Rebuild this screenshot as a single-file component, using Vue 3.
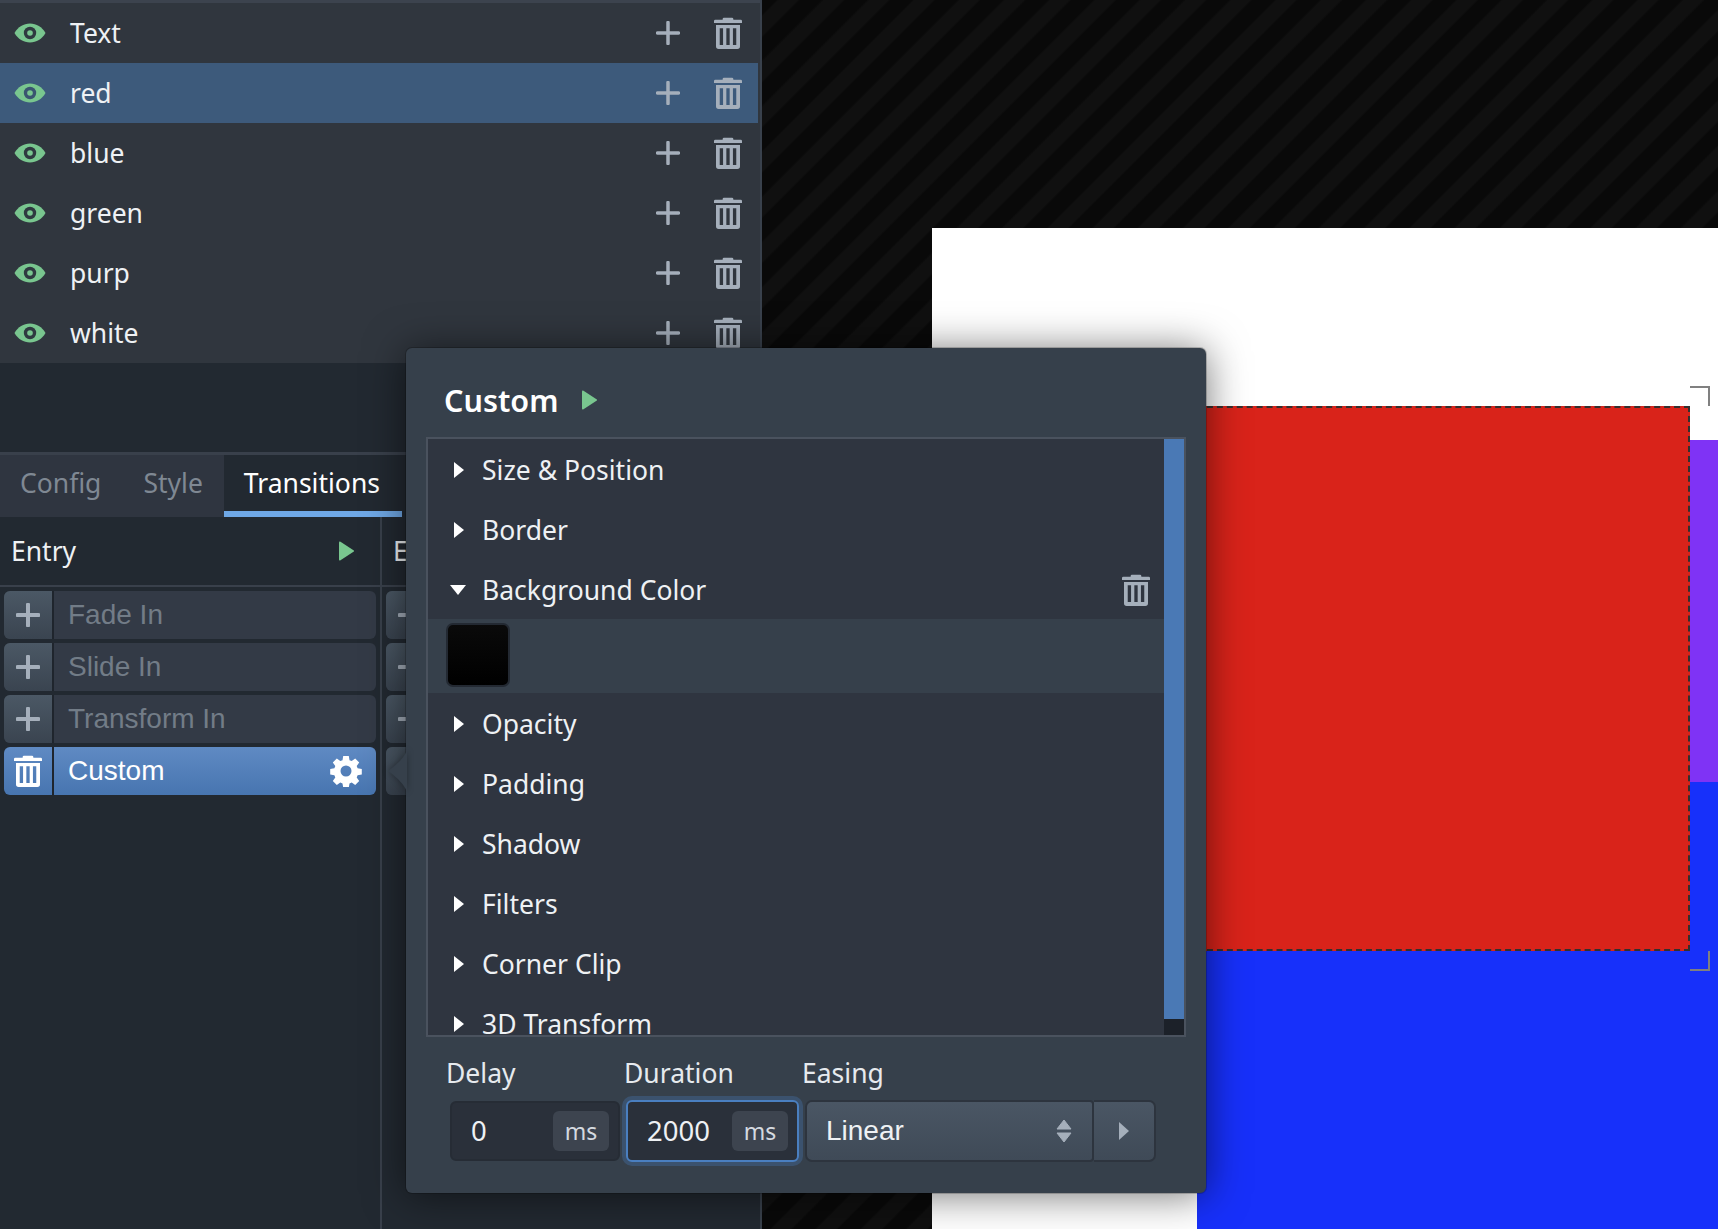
<script setup>
const layers = ['Text', 'red', 'blue', 'green', 'purp', 'white']
const presets = ['Fade In', 'Slide In', 'Transform In']
const groups = [
  { name: 'Size & Position' },
  { name: 'Border' },
  { name: 'Background Color', open: true },
  { name: 'Opacity' },
  { name: 'Padding' },
  { name: 'Shadow' },
  { name: 'Filters' },
  { name: 'Corner Clip' },
  { name: '3D Transform' }
]
const trashPath = 'M9 0.500h6a1 1 0 0 1 1 1V2h5.500a1 1 0 0 1 1 1v1.500h-21V3a1 1 0 0 1 1-1H8v-.5a1 1 0 0 1 1-1zM3 6h18v16a2 2 0 0 1-2 2H5a2 2 0 0 1-2-2zM5.800 8.500v12.500h2.500V8.500zm4.950 0v12.500h2.500V8.500zm4.950 0v12.500h2.500V8.500z'
const gearPath = 'M13.2 1h5.6l.7 4.2 2.2.9 3.5-2.5 4 4-2.5 3.5.9 2.2 4.2.7v5.6l-4.2.7-.9 2.2 2.5 3.5-4 4-3.5-2.5-2.2.9-.7 4.2h-5.600l-.7-4.2-2.200-.9-3.500 2.500-4-4 2.500-3.500-.9-2.200-4.200-.7v-5.600l4.200-.7.9-2.200-2.500-3.500 4-4 3.500 2.500 2.200-.9zM16 10.500a5.500 5.500 0 1 0 0 11 5.500 5.500 0 0 0 0-11z'
</script>

<template>
  <div class="app">
    <aside class="side">
      <div class="layers">
        <div v-for="layer in layers" :key="layer" class="layer" :class="{ selected: layer === 'red' }">
          <svg class="eye" viewBox="0 0 32 20">
            <path d="M0.500 10C4 4 9.500 0.500 16 0.500S28 4 31.500 10C28 16 22.500 19.500 16 19.500S4 16 0.500 10z" fill="#79c68f" />
            <circle cx="16" cy="10" r="6.200" fill="#2f3a40" />
            <circle cx="16" cy="10" r="2.800" fill="#79c68f" />
          </svg>
          <span class="layer-name">{{ layer }}</span>
          <svg class="plus" viewBox="0 0 24 24"><path d="M12 1.500v21M1.500 12h21" /></svg>
          <svg class="trash" viewBox="0 0 24 24"><path :d="trashPath" fill-rule="evenodd" /></svg>
        </div>
      </div>
      <div class="spacer"></div>
      <div class="tabs">
        <div class="tab">Config</div>
        <div class="tab">Style</div>
        <div class="tab active">Transitions</div>
        <div class="tab-rest"></div>
      </div>
      <div class="columns">
        <div class="col first">
          <div class="col-head">
            <span>Entry</span>
            <svg class="play" viewBox="0 0 16 20"><path d="M1 1.500v17a1 1 0 0 0 1.500.8l13-8.500a1 1 0 0 0 0-1.600l-13-8.500A1 1 0 0 0 1 1.500z" /></svg>
          </div>
          <div class="items">
            <div v-for="p in presets" :key="p" class="item">
              <div class="item-btn"><svg class="item-plus" viewBox="0 0 24 24"><path d="M1.500 12h21M12 1.500v21" /></svg></div>
              <div class="item-label">{{ p }}</div>
            </div>
            <div class="item on">
              <div class="item-btn"><svg class="item-trash" viewBox="0 0 24 24"><path :d="trashPath" fill-rule="evenodd" /></svg></div>
              <div class="item-label">Custom</div>
              <svg class="gear" viewBox="0 0 32 32"><path :d="gearPath" fill-rule="evenodd" /></svg>
            </div>
          </div>
        </div>
        <div class="col second">
          <div class="col-head">Exit</div>
          <div class="items">
            <div v-for="n in 4" :key="n" class="item">
              <div class="item-btn"><svg class="item-plus" viewBox="0 0 24 24"><path d="M1.500 12h21M12 1.500v21" /></svg></div>
            </div>
          </div>
        </div>
      </div>
    </aside>

    <main class="canvas">
      <div class="sheet"></div>
      <div class="box purple"></div>
      <div class="box blue"></div>
      <div class="box red"></div>
      <div class="corner tr"></div>
      <div class="corner br"></div>
    </main>

    <section class="popup">
      <svg class="arrow" viewBox="0 0 20 46"><path d="M20 0C20 8 8 18 1 23C8 28 20 38 20 46z" /></svg>
      <div class="pop-title">
        <span>Custom</span>
        <svg class="play" viewBox="0 0 16 20"><path d="M1 1.500v17a1 1 0 0 0 1.500.8l13-8.500a1 1 0 0 0 0-1.600l-13-8.500A1 1 0 0 0 1 1.500z" /></svg>
      </div>
      <div class="prop-box">
        <div class="prop-list">
          <template v-for="g in groups" :key="g.name">
            <div class="prop">
              <span class="caret" :class="{ open: g.open }"></span>
              <span class="prop-name">{{ g.name }}</span>
              <svg v-if="g.open" class="trash" viewBox="0 0 24 24"><path :d="trashPath" fill-rule="evenodd" /></svg>
            </div>
            <div v-if="g.open" class="prop-body"><div class="swatch"></div></div>
          </template>
        </div>
        <div class="scrollbar"><div class="thumb"></div></div>
      </div>
      <div class="fields">
        <div class="field delay">
          <label>Delay</label>
          <div class="input">
            <span class="value">0</span>
            <span class="unit">ms</span>
          </div>
        </div>
        <div class="field duration">
          <label>Duration</label>
          <div class="input focused">
            <span class="value">2000</span>
            <span class="unit">ms</span>
          </div>
        </div>
        <div class="field easing">
          <label>Easing</label>
          <div class="select-row">
            <div class="select">
              <span>Linear</span>
              <svg class="updown" viewBox="0 0 16 24"><path d="M8 1l7 9H1zM8 23l7-9H1z" /></svg>
            </div>
            <div class="next"><svg viewBox="0 0 10 18"><path d="M0 0l10 9-10 9z" /></svg></div>
          </div>
        </div>
      </div>
    </section>
  </div>
</template>

<style scoped>
.app {
  position: relative;
  display: flex;
  width: 1718px;
  height: 1229px;
  overflow: hidden;
  font-family: "Noto Sans", sans-serif;
  font-size: 26.500px;
  color: #eef1f4;
}
.side {
  display: flex;
  flex-direction: column;
  flex: 0 0 762px;
  box-sizing: border-box;
  background: #222931;
  border-right: 2px solid #39414c;
}
.layers {
  padding-top: 3px;
  background: #30363e;
  box-shadow: inset 0 3px 0 #3c434e;
}
.layer {
  display: flex;
  align-items: center;
  height: 60px;
  margin-right: 2px;
  padding: 0 14px;
}
.layer.selected {
  background: #3d5a7b;
}
.eye {
  width: 32px;
  height: 20px;
  flex: none;
}
.layer.selected .eye circle:nth-child(2) {
  fill: #3a5570;
}
.layer-name {
  flex: 1;
  margin-left: 24px;
}
.plus {
  width: 24px;
  height: 24px;
  margin-right: 32px;
  fill: none;
  stroke: #a5afbb;
  stroke-width: 3.500;
  stroke-linecap: round;
}
.trash {
  width: 32px;
  height: 32px;
  fill: #a5afbb;
  flex: none;
}
.spacer {
  height: 89px;
}
.tabs {
  display: flex;
  border-top: 3px solid #39404b;
  height: 62px;
  background: #2f3540;
}
.tab {
  padding: 0 21px;
  line-height: 56px;
  color: #7f8893;
}
.tab:first-child {
  padding-left: 20px;
}
.tab.active {
  box-sizing: border-box;
  width: 178px;
  padding: 0 0 0 20px;
  color: #fff;
  background: #222931;
  border-bottom: 6px solid #6fa8e6;
}
.tab-rest {
  flex: 1;
  background: #222931;
}
.columns {
  display: flex;
  flex: 1;
}
.col.first {
  box-sizing: border-box;
  flex: 0 0 382px;
  border-right: 2px solid #39404b;
}
.col.second {
  flex: 1;
}
.col-head {
  display: flex;
  align-items: center;
  justify-content: space-between;
  box-sizing: border-box;
  height: 70px;
  padding: 0 26px 0 11px;
  border-bottom: 2px solid #39404b;
}
.play {
  width: 16px;
  height: 20px;
  fill: #79c68f;
}
.items {
  display: flex;
  flex-direction: column;
  gap: 4px;
  padding: 4px;
}
.item {
  display: flex;
  align-items: center;
  height: 48px;
  border-radius: 6px;
  background: #333a46;
  font-family: "Liberation Sans", sans-serif;
  font-size: 28px;
  color: #727c87;
  overflow: hidden;
}
.item-btn {
  display: flex;
  align-items: center;
  justify-content: center;
  flex: none;
  width: 48px;
  height: 100%;
  background: linear-gradient(#4b5865, #3a4450);
  border-right: 2px solid #1f252d;
}
.item-plus {
  width: 24px;
  height: 24px;
  fill: none;
  stroke: #a5afbb;
  stroke-width: 4;
  stroke-linecap: round;
}
.item-label {
  flex: 1;
  padding-left: 14px;
}
.item.on {
  color: #fff;
  background: linear-gradient(#5f8ac3, #4775b0);
}
.item.on .item-btn {
  background: none;
}
.item-trash {
  width: 32px;
  height: 32px;
  fill: #fff;
}
.gear {
  width: 32px;
  height: 32px;
  margin-right: 14px;
  fill: #fff;
}
.canvas {
  position: relative;
  flex: 1;
  overflow: hidden;
  background: repeating-linear-gradient(-45deg, #090909 0 14px, #101010 16px 29px, #090909 31px 32px);
}
.sheet {
  position: absolute;
  left: 170px;
  top: 228px;
  right: 0;
  bottom: 0;
  background: #fff;
}
.box {
  position: absolute;
}
.purple {
  left: 435px;
  top: 440px;
  right: 0;
  height: 342px;
  background: #7f33f5;
}
.blue {
  left: 435px;
  top: 782px;
  right: 0;
  bottom: 0;
  background: #1730fa;
}
.red {
  box-sizing: border-box;
  left: 435px;
  top: 406px;
  width: 493px;
  height: 545px;
  background: #d9231a;
  border: 2px dashed #33302f;
}
.corner {
  position: absolute;
  left: 928px;
  width: 20px;
  height: 20px;
  box-sizing: border-box;
  border: 0 solid #808080;
  border-right-width: 2px;
}
.corner.tr {
  top: 386px;
  border-top-width: 2px;
}
.corner.br {
  top: 951px;
  border-bottom-width: 2px;
}
.popup {
  position: absolute;
  left: 406px;
  top: 348px;
  box-sizing: border-box;
  width: 800px;
  height: 845px;
  padding: 0 20px;
  background: #36404b;
  border-radius: 6px;
  box-shadow: 0 0 0 1px rgba(0, 0, 0, 0.2), 0 2px 40px rgba(0, 0, 0, 0.55);
}
.arrow {
  position: absolute;
  left: -19px;
  top: 400px;
  width: 20px;
  height: 46px;
  fill: #36404b;
  filter: drop-shadow(0 0 3px rgba(0, 0, 0, 0.35));
}
.pop-title {
  display: flex;
  align-items: center;
  gap: 23px;
  box-sizing: border-box;
  height: 89px;
  padding: 14px 0 0 18px;
  font-size: 30.500px;
  font-weight: 600;
  color: #fff;
}
.prop-box {
  display: flex;
  box-sizing: border-box;
  height: 600px;
  border: 2px solid #4a525e;
  background: #2f3540;
  overflow: hidden;
}
.prop-list {
  flex: 1;
  overflow: hidden;
}
.prop {
  display: flex;
  align-items: center;
  box-sizing: border-box;
  height: 60px;
  padding: 1px 12px 0 22px;
}
.caret {
  width: 0;
  height: 0;
  border-left: 10px solid #fff;
  border-top: 8px solid transparent;
  border-bottom: 8px solid transparent;
  margin-left: 4px;
}
.caret.open {
  border-left: 8px solid transparent;
  border-right: 8px solid transparent;
  border-top: 10px solid #fff;
  border-bottom: 0;
  margin-left: 0;
  margin-right: -2px;
}
.prop-name {
  flex: 1;
  margin-left: 18px;
}
.prop-body {
  display: flex;
  align-items: center;
  height: 74px;
  padding-left: 18px;
  background: #36404b;
}
.swatch {
  width: 64px;
  height: 64px;
  margin-bottom: 2px;
  box-sizing: border-box;
  border: 2px solid #232932;
  border-radius: 7px;
  background: linear-gradient(#0a0a0a, #000);
}
.scrollbar {
  flex: 0 0 20px;
  background: #1c2129;
}
.thumb {
  height: 580px;
  background: #4a79b5;
}
.fields {
  display: flex;
  padding-top: 20px;
}
.field label {
  display: block;
  height: 44px;
  line-height: 32px;
  color: #e6eaee;
}
.delay {
  flex: 0 0 198px;
  padding-left: 20px;
  box-sizing: border-box;
}
.duration {
  flex: 0 0 178px;
}
.easing {
  flex: 1;
}
.input {
  display: flex;
  align-items: center;
  justify-content: space-between;
  box-sizing: border-box;
  height: 60px;
  padding: 0 9px 2px 19px;
  border: 2px solid #262c35;
  border-radius: 6px;
  background: #2a303a;
  font-size: 27.500px;
}
.unit {
  display: flex;
  align-items: center;
  justify-content: center;
  width: 56px;
  height: 40px;
  margin-bottom: -2px;
  border-radius: 6px;
  background: #3d444f;
  font-size: 23px;
  color: #d5dae0;
}
.delay .input {
  margin-left: 4px;
  width: 170px;
}
.duration .input {
  width: 173px;
  height: 62px;
  margin-top: -1px;
  margin-left: 2px;
  border-color: #4a7fc0;
  box-shadow: 0 0 0 4px rgba(74, 127, 192, 0.3);
}
.select-row {
  display: flex;
  height: 62px;
  margin-top: -1px;
  width: 351px;
  margin-left: 3px;
}
.select {
  display: flex;
  align-items: center;
  justify-content: space-between;
  box-sizing: border-box;
  width: 289px;
  padding: 0 20px 0 19px;
  border: 2px solid #2d343e;
  border-radius: 7px 4px 4px 7px;
  background: linear-gradient(#4a5664, #3f4a57);
  font-family: "Liberation Sans", sans-serif;
  font-size: 28px;
}
.updown {
  width: 16px;
  height: 24px;
  fill: #a5afbb;
  stroke: #a5afbb;
  stroke-linejoin: round;
}
.next {
  display: flex;
  align-items: center;
  justify-content: center;
  flex: 1;
  border: 2px solid #2d343e;
  border-left: 0;
  border-radius: 0 7px 7px 0;
  background: linear-gradient(#4a5664, #3f4a57);
}
.next svg {
  width: 10px;
  height: 18px;
  fill: #a5afbb;
}
</style>

<style>
html, body {
  margin: 0;
  overflow: hidden;
  background: #222931;
}
</style>
